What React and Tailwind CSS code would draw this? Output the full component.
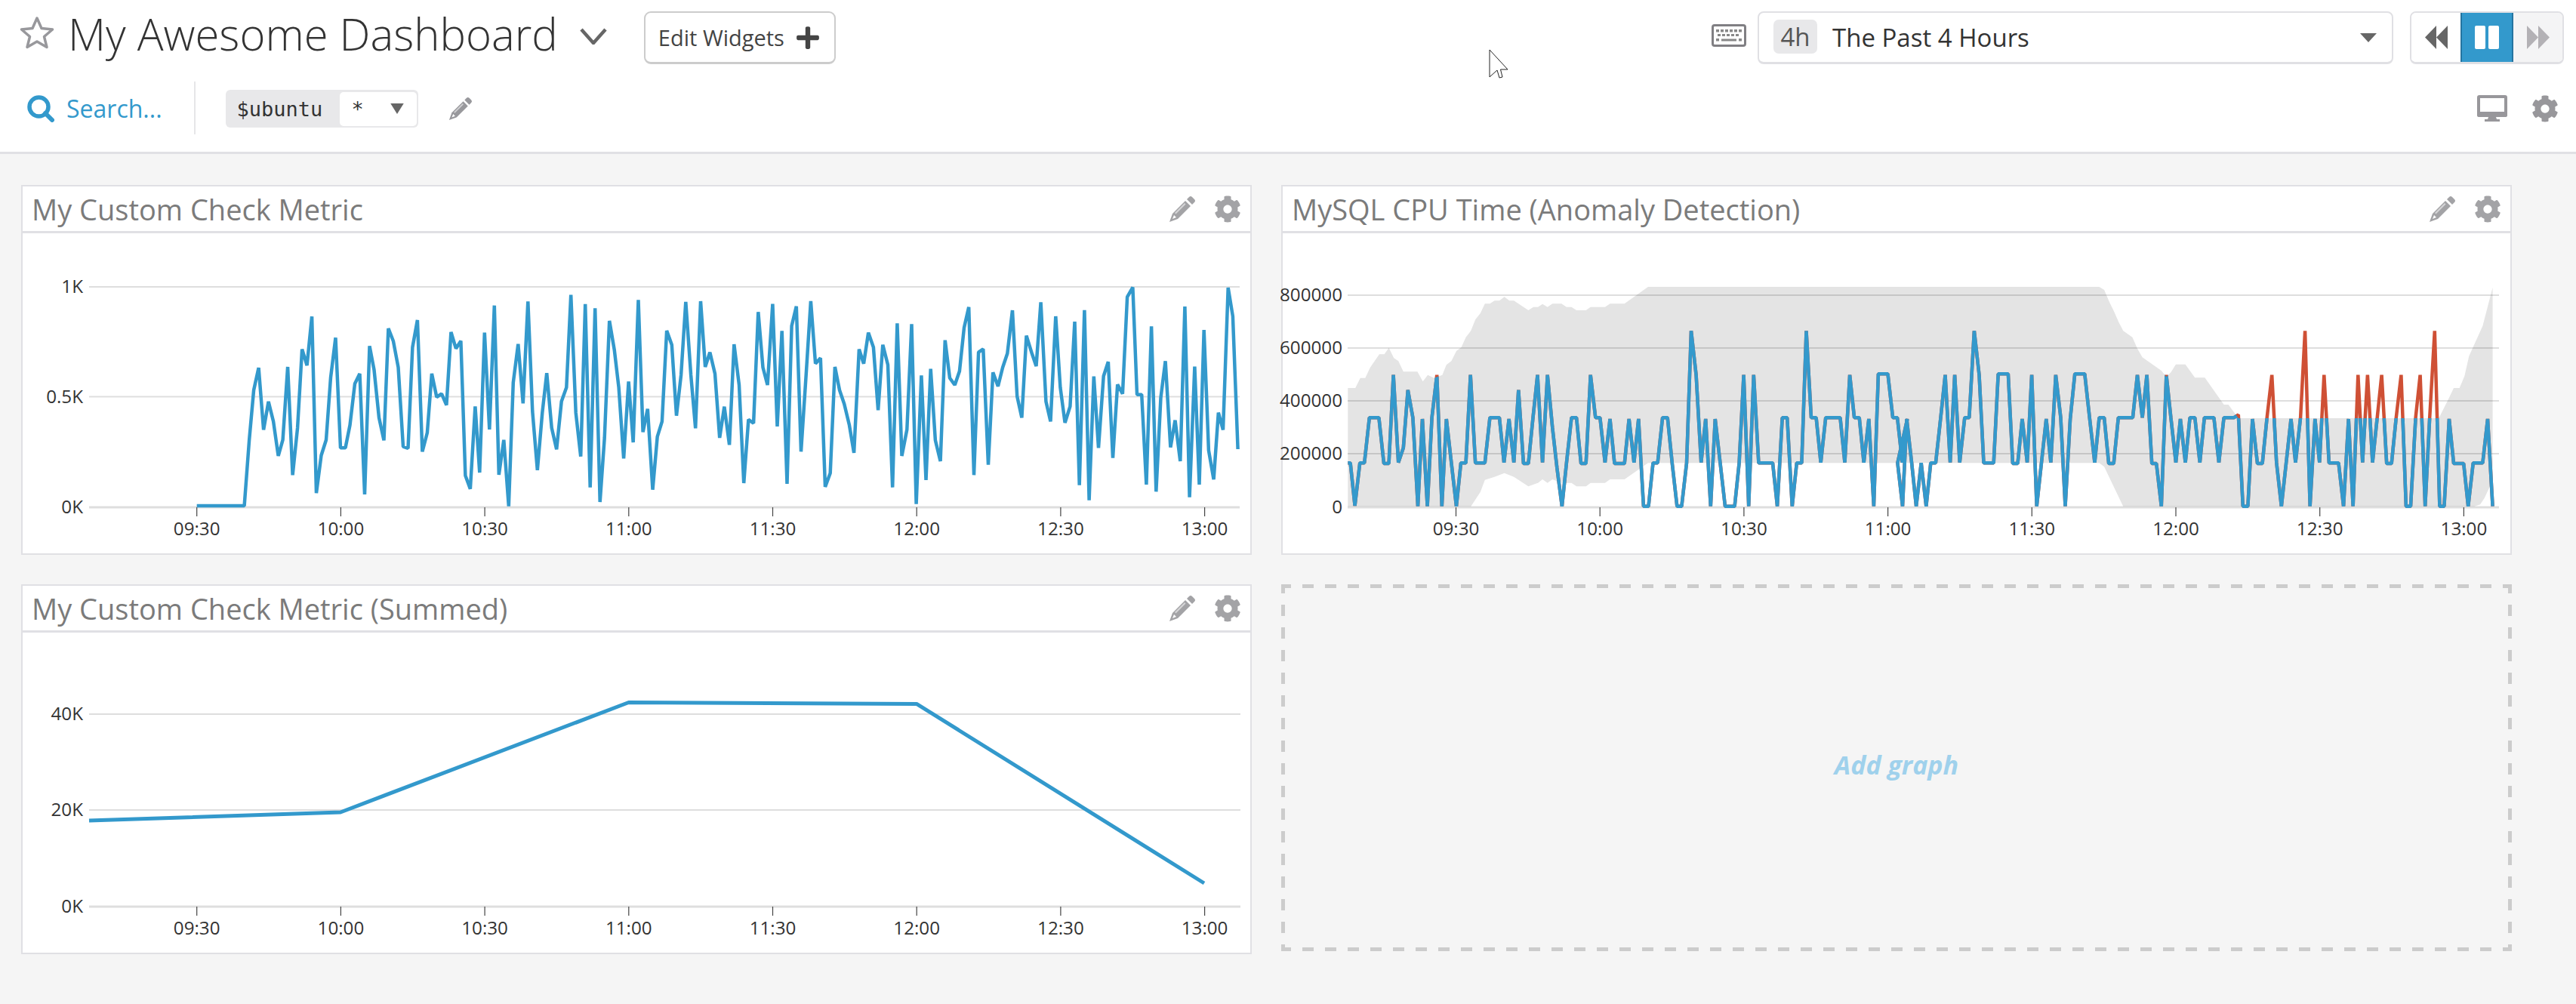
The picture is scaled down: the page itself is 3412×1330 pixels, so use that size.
import React from "react";
import { FaCog, FaPlus } from "react-icons/fa";

const F = { fontFamily: '"Open Sans", sans-serif' };
const BLUE = "#3399cc";

const c1a = [[481,1320],[597,1320],[609,1060],[620,860],[632,772],[644,1018],[656,906],[668,985],[680,1122],[691,1058],[703,768],[715,1198],[727,1010],[738,698],[750,762],[762,568],[773,1270],[785,1120],[797,1058],[808,810],[820,652],[832,1090],[844,1090],[855,1000],[867,835],[879,795],[891,1275],[903,685],[914,780],[926,970],[938,1060],[949,615],[961,665],[973,770],[985,1085],[997,1092],[1008,690],[1020,582],[1032,1105],[1044,1030],[1055,795],[1067,888],[1079,875],[1091,920],[1102,630],[1114,695],[1126,665],[1137,1200],[1149,1253],[1161,925],[1172,1188],[1184,632],[1196,1017],[1208,524],[1219,1197],[1231,1058],[1243,1322],[1254,830],[1266,677],[1278,913],[1290,508],[1301,945],[1313,1178],[1325,950],[1336,793],[1348,1010],[1360,1096],[1372,905],[1384,850],[1395,482],[1407,950],[1419,1124],[1430,518],[1442,1247],[1454,535],[1466,1305],[1477,1050],[1489,585],[1501,700],[1512,850],[1524,1132]];
const c1b = [[58,826],[69,1068],[81,502],[92,1027],[103,935],[115,1256],[126,1045],[137,985],[148,624],[160,680],[171,962],[182,800],[193,510],[205,800],[216,1012],[228,507],[239,768],[250,710],[262,795],[273,1050],[284,926],[296,1078],[307,678],[319,840],[330,1230],[341,977],[353,992],[364,550],[375,770],[386,840],[398,518],[409,1005],[420,625],[432,1233],[443,605],[454,527],[465,1105],[477,800],[488,507],[499,755],[511,733],[522,1245],[534,1190],[545,768],[556,860],[567,915],[579,1000],[590,1110],[602,698],[613,755],[624,632],[636,690],[647,940],[658,680],[670,760],[681,1247],[692,595],[703,1122],[715,1017],[726,598],[737,1313],[749,802],[760,1218],[771,776],[782,1060],[794,1143],[805,662],[816,812],[828,840],[839,785],[850,612],[861,530],[873,1198],[884,710],[895,697],[907,1157],[918,790],[930,845],[941,770],[952,715],[964,543],[975,885],[986,970],[997,644],[1009,710],[1020,765],[1031,511],[1043,905],[1054,985],[1066,567],[1077,850],[1088,990],[1100,925],[1111,588],[1122,1238],[1134,542],[1145,1298],[1156,806],[1167,1090],[1179,805],[1190,748],[1201,1130],[1212,838],[1224,875],[1235,490],[1248,452],[1258,878],[1269,878],[1280,1236],[1292,607],[1303,1264],[1314,890],[1325,745],[1337,1088],[1348,980],[1360,1143],[1371,528],[1382,1286],[1394,767],[1405,1236],[1416,621],[1427,1100],[1439,1215],[1450,950],[1461,1018],[1473,453],[1484,567],[1496,1095]];
const line1 = [
  ...c1a.map(([x, y]) => [x / 1.84471, 230 + y / 3]),
  ...c1b.map(([x, y]) => [800 + x / 1.7818, 230 + y / 3]),
];

const c2a = [[192,1150],[198,1150],[209,1320],[221,1150],[232,1150],[244,970],[267,970],[279,1152],[291,1152],[302,800],[314,1148],[326,1090],[337,860],[349,970],[361,1322],[372,975],[384,1322],[395,970],[407,800],[419,1322],[430,975],[442,1150],[454,1322],[465,1150],[477,1150],[488,800],[500,1150],[523,1150],[535,970],[558,970],[569,1148],[581,975],[593,1148],[604,860],[616,1152],[628,1152],[639,970],[650,800],[662,1148],[674,800],[686,1010],[697,1170],[709,1322],[720,1150],[732,970],[744,970],[755,1152],[767,1152],[778,800],[790,970],[801,970],[813,1148],[825,975],[836,1152],[860,1152],[871,975],[883,1148],[894,975],[906,1322],[918,1322],[929,1150],[940,1150],[952,970],[964,970],[975,1150],[987,1322],[998,1322],[1010,1150],[1021,625],[1033,800],[1045,1148],[1056,975],[1068,1322],[1079,975],[1091,1148],[1103,1322],[1126,1322],[1137,1150],[1148,800],[1160,1322],[1172,800],[1184,1150],[1218,1150],[1229,1322],[1241,970],[1253,970],[1265,1322],[1276,1150],[1288,1150],[1299,625],[1311,970],[1323,970],[1334,1148],[1346,970],[1381,970],[1392,1148],[1404,800],[1415,970],[1427,970],[1438,1148],[1450,975],[1462,1322],[1473,796],[1496,796],[1508,970],[1519,970],[1531,1148],[1543,975]];
const c2b = [[-12,1150],[0,1322],[10,975],[22,1150],[33,1322],[45,1150],[57,1322],[68,1150],[80,1150],[92,970],[103,800],[115,1148],[126,800],[138,1148],[150,970],[161,970],[173,625],[185,800],[196,1150],[220,1150],[231,796],[255,796],[266,1152],[278,1152],[289,975],[301,1148],[312,800],[324,1322],[347,975],[358,1148],[370,800],[382,970],[393,1322],[405,975],[416,796],[440,796],[452,975],[464,1148],[475,970],[487,970],[498,1152],[510,1152],[521,970],[556,970],[567,800],[579,970],[590,800],[602,1152],[613,1152],[625,1322],[637,800],[648,970],[660,1148],[671,975],[683,1148],[694,970],[706,970],[718,1148],[729,970],[752,970],[764,1148],[776,970],[800,970],[811,958],[822,1322],[834,1322],[845,975],[857,1152],[869,1152],[880,970],[892,800],[903,1148],[915,1322],[938,975],[949,1148],[961,970],[972,625],[984,1322],[996,975],[1007,1148],[1018,800],[1030,1150],[1053,1150],[1065,1322],[1077,975],[1088,1322],[1100,800],[1111,1148],[1123,800],[1135,1148],[1157,800],[1169,1152],[1181,1152],[1192,970],[1204,800],[1216,1322],[1227,1322],[1239,970],[1250,800],[1262,1322],[1273,970],[1285,625],[1297,1322],[1308,1322],[1320,975],[1331,1152],[1355,1152],[1366,1322],[1378,1150],[1401,1150],[1413,975],[1425,1322]];
const k = 1568 / 860;
const za = ([x, y]) => [1680 + x / k, 230 + y / 3];
const zb = ([x, y]) => [2520 + x / k, 230 + y / 3];
const line2 = [...c2a.map(za), ...c2b.map(zb)];

const upA = [[192,852],[210,852],[222,812],[234,812],[246,770],[268,718],[280,718],[291,692],[303,733],[314,745],[326,787],[360,787],[373,826],[385,800],[400,812],[420,800],[430,760],[442,745],[454,705],[466,690],[477,650],[489,625],[500,580],[512,555],[523,517],[535,517],[546,505],[558,505],[570,490],[582,505],[593,505],[628,543],[640,530],[651,530],[662,518],[674,530],[686,517],[708,517],[720,530],[732,530],[744,543],[767,543],[778,530],[813,530],[825,517],[860,517],[917,450]];
const upB = [[475,450],[487,462],[498,505],[510,545],[522,590],[533,625],[555,650],[567,695],[579,730],[625,783],[637,808],[648,790],[660,758],[683,758],[706,811],[730,811],[776,918],[787,918],[811,972],[1295,972],[1320,890],[1331,852],[1345,852],[1357,805],[1368,725],[1401,605],[1425,452]];
const loB = [[1425,1220],[1405,1290],[1395,1315],[1380,1323],[533,1323],[487,1165],[475,1150]];
const loA = [[917,1150],[860,1215],[825,1215],[813,1229],[778,1229],[767,1243],[744,1243],[732,1229],[708,1229],[686,1215],[674,1229],[662,1215],[651,1229],[628,1243],[593,1205],[570,1190],[546,1205],[523,1217],[512,1265],[489,1323],[192,1323]];
const upper = [...upA.map(za), ...upB.map(zb)];
const band = [...upper, ...loB.map(zb), ...loA.map(za)];
const clip = [[1780, upper[0][1]], ...upper, [3312, upper[upper.length - 1][1]], [3312, 680], [1780, 680]];

const pts = (a) => a.map(([x, y]) => `${x.toFixed(1)},${y.toFixed(1)}`).join(" ");

function Grid({ x0, x1, ys, ticks, base, yr }) {
  return (
    <g>
      {ys.map(([y, label]) => (
        <g key={label}>
          <line x1={x0} x2={x1} y1={y} y2={y} stroke="#000" strokeOpacity="0.13" strokeWidth={label === "0" || label === "0K" ? 3 : 2} />
          <text x={yr} y={y + 8} textAnchor="end" fontSize="24.2" fill="#333" style={F}>{label}</text>
        </g>
      ))}
      {ticks.map(([x, label]) => (
        <g key={label}>
          <line x1={x} x2={x} y1={base} y2={base + 12} stroke="#444" strokeWidth="1.2" />
          <text x={x} y={base + 37} textAnchor="middle" fontSize="24.2" fill="#333" style={F}>{label}</text>
        </g>
      ))}
    </g>
  );
}

const labels = ["09:30", "10:00", "10:30", "11:00", "11:30", "12:00", "12:30", "13:00"];
const ticksL = labels.map((l, i) => [260.7 + i * 190.7, l]);
const ticksR = labels.map((l, i) => [1928.5 + i * 190.7, l]);

function Pencil({ className, color = "#a3a3a6" }) {
  return (
    <svg viewBox="0 0 36 36" className={className}>
      <path d="M5 24 L22 7 L29 14 L12 31 L1 35 Z" fill={color} />
      <path d="M7 26 L10 29 L5 31 Z" fill="#fff" />
      <path d="M8 23 L21 10 L22.5 11.5 L9.5 24.5 Z" fill="#fff" fillOpacity="0.55" />
      <path d="M24 5 L27 2 Q29 0 31 2 L34 5 Q36 7 34 9 L31 12 Z" fill={color} />
    </svg>
  );
}

function Panel({ title, left, top, children }) {
  return (
    <div className="w-[1630px] h-[490px] bg-white border-2 border-[#e0e0e4] flex flex-col">
      <div className="h-[62px] shrink-0 border-b-[3px] border-[#e0e0e4] flex items-center pl-[12px] pr-[12px]">
        <span className="text-[38px] leading-none text-[#7b7b7b]" style={F}>{title}</span>
        <div className="ml-auto flex items-center gap-[24px]">
          <Pencil className="w-[36px] h-[36px]" />
          <FaCog className="w-[36px] h-[36px] text-[#a3a3a6]" />
        </div>
      </div>
      <svg width="1626" height="424" viewBox={`${left + 2} ${top + 64} 1626 424`} className="block overflow-visible">
        {children}
      </svg>
    </div>
  );
}

export default function App() {
  return (
    <div className="relative w-[3412px] h-[1330px] bg-[#f5f5f5] overflow-hidden" style={F}>
      <header className="bg-white border-b-[3px] border-[#e0e0e4] h-[204px]">
        <div className="h-[100px] flex items-center">
          <svg viewBox="0 0 46 44" className="w-[46px] h-[44px] ml-[26px] -mt-[14px]">
            <polygon points="23,3 29,16.5 43.5,18 32.5,27.5 36,41.5 23,34 10,41.5 13.5,27.5 2.5,18 17,16.5" fill="none" stroke="#98989c" strokeWidth="3.5" strokeLinejoin="round" />
          </svg>
          <h1 className="ml-[18px] text-[58px] leading-none font-light text-[#333] whitespace-nowrap -mt-[10px]">My Awesome Dashboard</h1>
          <svg viewBox="0 0 36 22" className="w-[36px] h-[22px] ml-[29px] -mt-[4px]">
            <path d="M2 2 L18 20 L34 2" fill="none" stroke="#666" strokeWidth="4.5" />
          </svg>
          <button className="ml-[49px] w-[254px] h-[70px] bg-white rounded-[9px] border-2 border-b-[3px] border-[#ccc] flex items-center pl-[17px] text-[#444]">
            <span className="text-[29px] leading-none whitespace-nowrap">Edit Widgets</span>
            <FaPlus className="ml-[14px] w-[34px] h-[34px] text-[#444]" />
          </button>
          <svg viewBox="0 0 46 30" className="ml-auto w-[46px] h-[30px] -mt-[6px]">
            <rect x="1.5" y="1.5" width="43" height="27" rx="2.5" fill="#fff" stroke="#807f83" strokeWidth="3" />
            {[6, 12, 18, 24, 30, 36].map((x) => <rect key={x} x={x} y="7" width="4" height="3.5" fill="#888" />)}
            {[8, 14, 20, 26, 32].map((x) => <rect key={x} x={x} y="13" width="4" height="3" fill="#888" />)}
            <rect x="6" y="19" width="4" height="3.5" fill="#888" />
            <rect x="13" y="19.5" width="20" height="3" fill="#888" />
            <rect x="36" y="19" width="4" height="3.5" fill="#888" />
          </svg>
          <div className="ml-[15px] w-[842px] h-[70px] rounded-[8px] border-2 border-b-[3px] border-[#e0e0e4] flex items-center pl-[19px] pr-[20px]">
            <span className="w-[58px] h-[45px] rounded-[7px] bg-[#e8e8ea] flex items-center justify-center text-[33px] text-[#555] leading-none -mt-[2px]">4h</span>
            <span className="ml-[20px] text-[33px] leading-none text-[#333] whitespace-nowrap">The Past 4 Hours</span>
            <svg viewBox="0 0 22 12" className="ml-auto w-[22px] h-[12px]"><polygon points="0,0 22,0 11,12" fill="#666" /></svg>
          </div>
          <div className="ml-[22px] mr-[16px] w-[204px] h-[70px] flex rounded-[8px] overflow-hidden border-2 border-b-[3px] border-[#e0e0e4]">
            <div className="w-[65px] bg-white flex items-center justify-center">
              <svg viewBox="0 0 30 31" className="w-[30px] h-[31px]"><polygon points="0,15.5 15,0 15,31" fill="#666" /><polygon points="15,15.5 30,0 30,31" fill="#666" /></svg>
            </div>
            <div className="w-[70px] -my-[2px] bg-[#3399cc] border-2 border-[#2574a0] flex items-center justify-center gap-[4px]">
              <span className="w-[14px] h-[31px] bg-white rounded-[2px]" />
              <span className="w-[14px] h-[31px] bg-white rounded-[2px]" />
            </div>
            <div className="flex-1 bg-[#f4f4f5] flex items-center justify-center">
              <svg viewBox="0 0 30 31" className="w-[30px] h-[31px]"><polygon points="0,0 15,15.5 0,31" fill="#b3b1b5" /><polygon points="15,0 30,15.5 15,31" fill="#b3b1b5" /></svg>
            </div>
          </div>
        </div>
        <div className="h-[88px] flex items-center">
          <svg viewBox="0 0 36 36" className="ml-[36px] w-[36px] h-[36px]">
            <circle cx="15.5" cy="15.5" r="12.5" fill="none" stroke={BLUE} strokeWidth="5.5" />
            <line x1="24" y1="24" x2="33" y2="33" stroke={BLUE} strokeWidth="6" strokeLinecap="round" />
          </svg>
          <span className="ml-[16px] text-[32px] leading-none text-[#3399cc] whitespace-nowrap">Search...</span>
          <div className="ml-[42px] w-[2px] h-[70px] bg-[#e6e6e8] -mt-[3px]" />
          <div className="ml-[40px] w-[255px] h-[50px] rounded-[6px] bg-[#e8e8ea] flex items-center pr-[2px]">
            <span className="pl-[15px] w-[151px] text-[27px] leading-none text-[#333]" style={{ fontFamily: '"DejaVu Sans Mono", monospace' }}>$ubuntu</span>
            <div className="flex-1 h-[45px] bg-white rounded-[5px] flex items-center pl-[16px]">
              <span className="text-[27px] leading-none text-[#333]" style={{ fontFamily: '"DejaVu Sans Mono", monospace' }}>*</span>
              <svg viewBox="0 0 20 16" className="ml-auto mr-[16px] w-[20px] h-[14px]"><polygon points="0,0 20,0 10,16" fill="#666" /></svg>
            </div>
          </div>
          <Pencil className="ml-[40px] w-[32px] h-[32px]" color="#98989c" />
          <svg viewBox="0 0 40 36" className="ml-auto w-[40px] h-[36px]">
            <path d="M3 0 H37 Q40 0 40 3 V27 Q40 29 37 29 H25 L26 32 H30 V35 H10 V32 H14 L15 29 H3 Q0 29 0 27 V3 Q0 0 3 0 Z M4 4 V22 H36 V4 Z" fill="#98979b" fillRule="evenodd" />
          </svg>
          <FaCog className="ml-[32px] mr-[23px] w-[36px] h-[36px] text-[#98979b]" />
        </div>
      </header>

      <main className="pt-[41px] pl-[28px] grid grid-cols-[1630px_1630px] gap-x-[39px] gap-y-[39px] w-max">
        <Panel title="My Custom Check Metric" left={28} top={245}>
          <Grid x0={118} x1={1642} base={672} yr={110} ticks={ticksL} ys={[[380, "1K"], [525.5, "0.5K"], [672, "0K"]]} />
          <polyline points={pts(line1)} fill="none" stroke={BLUE} strokeWidth="4.5" strokeLinejoin="bevel" />
        </Panel>

        <Panel title="MySQL CPU Time (Anomaly Detection)" left={1697} top={245}>
          <defs>
            <clipPath id="in-band"><polygon points={pts(clip)} /></clipPath>
          </defs>
          <polygon points={pts(band)} fill="#e4e4e4" />
          <Grid x0={1785} x1={3310} base={672} yr={1778} ticks={ticksR} ys={[[391, "800000"], [461, "600000"], [531, "400000"], [601, "200000"], [672, "0"]]} />
          <polyline points={pts(line2)} fill="none" stroke="#cf5035" strokeWidth="4.5" strokeLinejoin="bevel" />
          <polyline points={pts(line2)} fill="none" stroke={BLUE} strokeWidth="4.5" strokeLinejoin="bevel" clipPath="url(#in-band)" />
        </Panel>

        <Panel title="My Custom Check Metric (Summed)" left={28} top={774}>
          <Grid x0={118} x1={1643} base={1201} yr={110} ticks={ticksL} ys={[[946, "40K"], [1073, "20K"], [1201, "0K"]]} />
          <polyline points="118,1087 451,1076 832.7,930.5 1214,932.4 1595,1170" fill="none" stroke={BLUE} strokeWidth="5" strokeLinejoin="bevel" />
        </Panel>

        <div className="w-[1630px] h-[486px] self-start flex items-center justify-center bg-no-repeat bg-[repeating-linear-gradient(90deg,#cccccc_-2px,#cccccc_13px,transparent_13px,transparent_28px),repeating-linear-gradient(90deg,#cccccc_-2px,#cccccc_13px,transparent_13px,transparent_28px),repeating-linear-gradient(180deg,#cccccc_-3px,#cccccc_12px,transparent_12px,transparent_27px),repeating-linear-gradient(180deg,#cccccc_-3px,#cccccc_12px,transparent_12px,transparent_27px)] [background-size:100%_5px,100%_5px,5px_100%,5px_100%] [background-position:0_0,0_100%,0_0,100%_0]">
          <span className="text-[34px] font-bold italic text-[#9fd1ec] leading-none -mt-[8px]">Add graph</span>
        </div>
      </main>

      <svg viewBox="0 0 26 39" className="absolute left-[1972px] top-[65px] w-[26px] h-[39px]">
        <path d="M1 1 L25 27 L15.5 27 L18 37 L14 38 L11 28 L1 37 Z" fill="#fff" stroke="#222" strokeWidth="1" />
      </svg>
    </div>
  );
}
